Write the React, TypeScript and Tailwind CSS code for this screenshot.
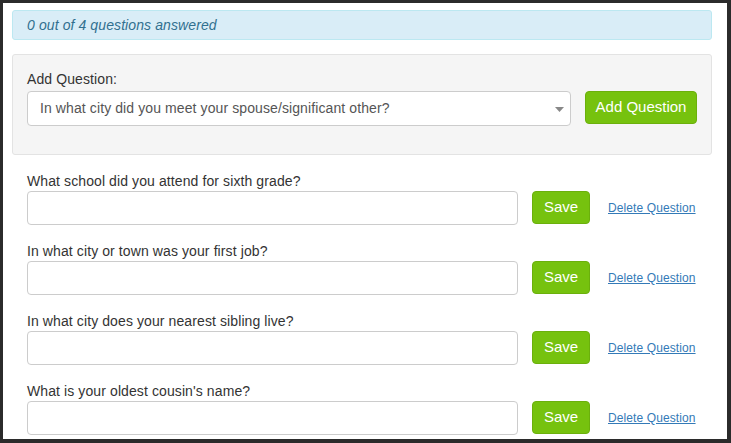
const questions = [
  "What school did you attend for sixth grade?",
  "In what city or town was your first job?",
  "In what city does your nearest sibling live?",
  "What is your oldest cousin's name?",
];

export default function App() {
  return (
    <div
      className="h-[443px] w-[731px] overflow-hidden bg-[#2b2b2b] pt-[3px] pl-[3px] pr-[4px] pb-[4px] text-[14px] tracking-[0.1px] text-[#333]"
      style={{ fontFamily: '"Liberation Sans", Arial, sans-serif' }}
    >
      <div className="h-full overflow-hidden bg-white pt-[7px] pl-[9px] pr-[15px]">
        <div className="h-[30px] rounded-[3px] border border-[#bce8f1] bg-[#d9edf7] pl-[14px] leading-[28px] italic text-[#31708f]">
          0 out of 4 questions answered
        </div>

        <div className="mt-[14px] h-[101px] rounded-[3px] border border-[#e3e3e3] bg-[#f5f5f5] px-[14px] pt-[14px]">
          <div className="leading-[20px]">Add Question:</div>
          <div className="mt-[2px] flex items-start gap-[14px]">
            <div className="relative flex h-[35px] w-[544px] items-center rounded-[4px] border border-[#ccc] bg-white pl-[12px] text-[#555]">
              In what city did you meet your spouse/significant other?
              <svg className="absolute right-[6px] top-[15px]" width="9" height="5" viewBox="0 0 9 5">
                <path d="M0 0h9L4.5 5z" fill="#888" />
              </svg>
            </div>
            <button className="h-[33px] w-[112px] rounded-[4px] border border-[#6bb00c] bg-[#76c20e] text-[15px] tracking-normal text-white">
              Add Question
            </button>
          </div>
        </div>

        <div className="px-[15px] pt-[16px]">
          {questions.map((q) => (
            <div key={q} className="mb-[16px]">
              <div className="leading-[20px]">{q}</div>
              <div className="flex items-start">
                <input className="h-[34px] w-[491px] rounded-[4px] border border-[#ccc] bg-white" />
                <button className="ml-[14px] h-[33px] w-[58px] rounded-[4px] border border-[#6bb00c] bg-[#76c20e] text-[15px] tracking-normal text-white">
                  Save
                </button>
                <a href="#" className="ml-[18px] mt-[9px] text-[12px] leading-[16px] text-[#337ab7] underline">
                  Delete Question
                </a>
              </div>
            </div>
          ))}
        </div>
      </div>
    </div>
  );
}
